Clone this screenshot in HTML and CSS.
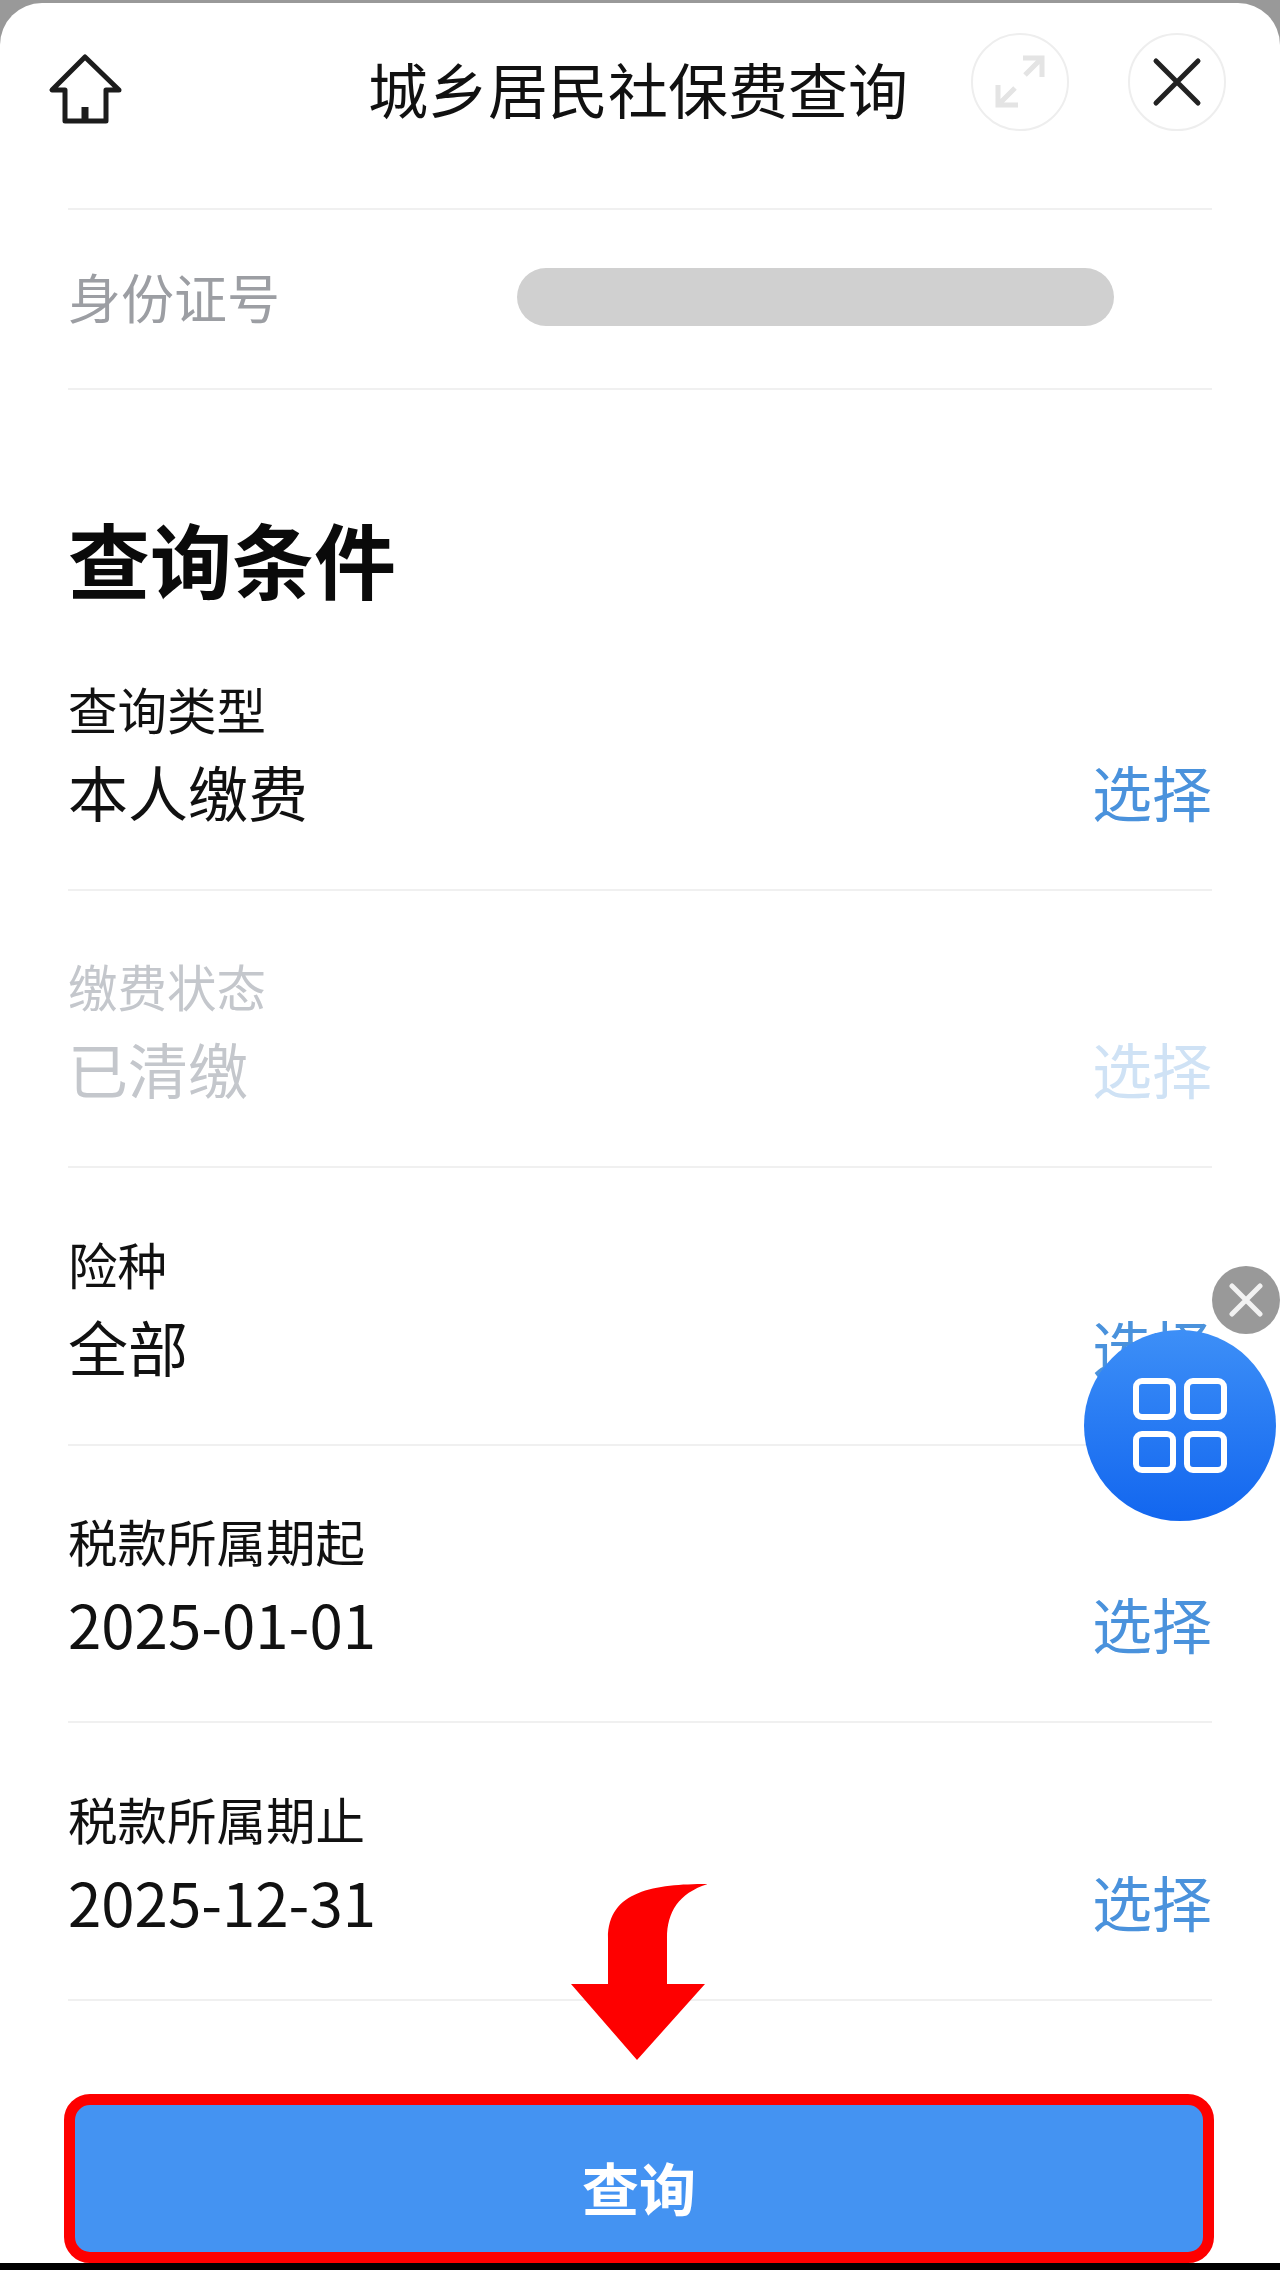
FILE: index.html
```html
<!DOCTYPE html>
<html lang="zh-CN">
<head>
  <meta charset="UTF-8">
  <title>城乡居民社保费查询</title>
  <link rel="stylesheet" href="styles.css">
</head>
<body>
  <div class="sheet">
    <header class="top-bar">
      <svg class="home-icon" width="80" height="80" viewBox="0 0 80 80" fill="none" stroke="#1c1c1c" stroke-width="5" stroke-linejoin="round">
        <path d="M40 9 L7 42 H20 V73 H61 V42 H74 Z"/>
        <path d="M40 59 V72" stroke-width="7"/>
      </svg>
      <h1 class="page-title">城乡居民社保费查询</h1>
      <div class="round-btn expand-btn">
        <svg width="60" height="60" viewBox="0 0 60 60" fill="none" stroke="#e4e4e4" stroke-width="5">
          <path d="M35 23 L50 8 M33 6 H52 V25"/>
          <path d="M25 36 L10 51 M8 33 V53 H28"/>
        </svg>
      </div>
      <div class="round-btn close-btn">
        <svg width="50" height="50" viewBox="0 0 50 50" fill="none" stroke="#222" stroke-width="5" stroke-linecap="round">
          <path d="M4 4 L46 46 M46 4 L4 46"/>
        </svg>
      </div>
    </header>

    <div class="content">
      <div class="id-row">
        <span class="id-label">身份证号</span>
        <span class="id-mask"></span>
      </div>

      <h2 class="section-title">查询条件</h2>

      <div class="cond-row">
        <div>
          <div class="cond-label">查询类型</div>
          <div class="cond-value">本人缴费</div>
        </div>
        <a class="cond-pick">选择</a>
      </div>
      <div class="cond-row disabled">
        <div>
          <div class="cond-label">缴费状态</div>
          <div class="cond-value">已清缴</div>
        </div>
        <a class="cond-pick">选择</a>
      </div>
      <div class="cond-row">
        <div>
          <div class="cond-label">险种</div>
          <div class="cond-value">全部</div>
        </div>
        <a class="cond-pick">选择</a>
      </div>
      <div class="cond-row">
        <div>
          <div class="cond-label">税款所属期起</div>
          <div class="cond-value">2025-01-01</div>
        </div>
        <a class="cond-pick">选择</a>
      </div>
      <div class="cond-row">
        <div>
          <div class="cond-label">税款所属期止</div>
          <div class="cond-value">2025-12-31</div>
        </div>
        <a class="cond-pick">选择</a>
      </div>

      <button class="query-btn">查询</button>
    </div>

    <!-- 悬浮按钮 -->
    <div class="float-close">
      <svg width="34" height="34" viewBox="0 0 34 34" stroke="#f2f2f2" stroke-width="5" stroke-linecap="round">
        <path d="M3 3 L31 31 M31 3 L3 31"/>
      </svg>
    </div>
    <div class="float-menu">
      <svg width="94" height="95" viewBox="0 0 94 95" fill="none" stroke="#fff" stroke-width="6">
        <rect x="3" y="3" width="37" height="36" rx="6"/>
        <rect x="54" y="3" width="37" height="36" rx="6"/>
        <rect x="3" y="56" width="37" height="36" rx="6"/>
        <rect x="54" y="56" width="37" height="36" rx="6"/>
      </svg>
    </div>

    <!-- 红色指示箭头 -->
    <svg class="down-arrow" width="136" height="176" viewBox="0 0 136 176">
      <path d="M137 0 C85 0 37 6 37 54 V100 H0 L66 176 L134 100 H96 V54 C96 28 108 9 137 0 Z" fill="#fe0000"/>
    </svg>
  </div>
  <div class="bottom-edge"></div>
</body>
</html>
```

FILE: styles.css
```css
* {
  box-sizing: border-box;
}
body {
  margin: 0;
  width: 1280px;
  height: 2270px;
  overflow: hidden;
  padding-top: 3px;
  background: #999;
  font-family: "Noto Sans CJK SC", "Noto Sans", sans-serif;
  color: #111;
}
.sheet {
  position: relative;
  height: 2260px;
  background: #fff;
  border-radius: 42px 42px 0 0;
}
.bottom-edge {
  height: 7px;
  background: #000;
}

/* 顶部标题栏 */
.top-bar {
  position: relative;
  height: 159px;
  display: flex;
  align-items: center;
  padding: 0 54px 0 45px;
}
.home-icon {
  flex: none;
  margin-top: 11px;
}
.page-title {
  position: absolute;
  left: 368px;
  top: 50px;
  margin: 0;
  font-size: 60px;
  line-height: 70px;
  font-weight: 400;
  white-space: nowrap;
}
.round-btn {
  width: 98px;
  height: 98px;
  margin-top: -2px;
  border-radius: 50%;
  border: 2px solid #eee;
  display: flex;
  align-items: center;
  justify-content: center;
}
.expand-btn {
  margin-left: auto;
  margin-right: 59px;
}

.content {
  padding: 46px 68px 0;
}
.id-row {
  height: 182px;
  border-top: 2px solid #f0f0f0;
  border-bottom: 2px solid #f0f0f0;
  display: flex;
  align-items: center;
}
.id-label {
  width: 449px;
  margin-top: -6px;
  font-size: 53px;
  color: #9c9ea3;
}
.id-mask {
  width: 597px;
  height: 58px;
  margin-top: -5px;
  border-radius: 29px;
  background: #d0d0d0;
}
.section-title {
  margin: 118px 0 5px;
  font-size: 82px;
  line-height: 100px;
  font-weight: 700;
  color: #0a0a0a;
}

/* 查询条件 */
.cond-row {
  height: 277.5px;
  padding: 60px 0 58px 0;
  border-bottom: 2px solid #f0f0f0;
  display: flex;
  justify-content: space-between;
  align-items: flex-end;
}
.cond-label {
  font-size: 49.5px;
  line-height: 60px;
  margin-bottom: 12px;
}
.cond-value {
  font-size: 60px;
  line-height: 80px;
}
.cond-pick {
  font-size: 60px;
  line-height: 80px;
  color: #4a92dc;
}
.disabled .cond-label,
.disabled .cond-value {
  color: #c4c7cc;
}
.disabled .cond-pick {
  color: #cfe2f5;
}

.query-btn {
  display: block;
  width: 1150px;
  height: 169px;
  margin: 93px 0 0 -4px;
  padding: 16px 0 0;
  border: 11px solid #fe0000;
  border-radius: 26px;
  background: #4493f2;
  color: #fff;
  font-family: inherit;
  font-size: 57px;
  font-weight: 700;
}

/* 悬浮按钮 */
.float-close {
  position: absolute;
  left: 1212px;
  top: 1263px;
  width: 68px;
  height: 68px;
  border-radius: 50%;
  background: #999;
  display: flex;
  align-items: center;
  justify-content: center;
}
.float-menu {
  position: absolute;
  left: 1084px;
  top: 1327px;
  width: 192px;
  height: 191px;
  border-radius: 50%;
  background: linear-gradient(#3d8ff7, #1266ef);
  display: flex;
  align-items: center;
  justify-content: center;
}
.down-arrow {
  position: absolute;
  left: 571px;
  top: 1881px;
}
```
